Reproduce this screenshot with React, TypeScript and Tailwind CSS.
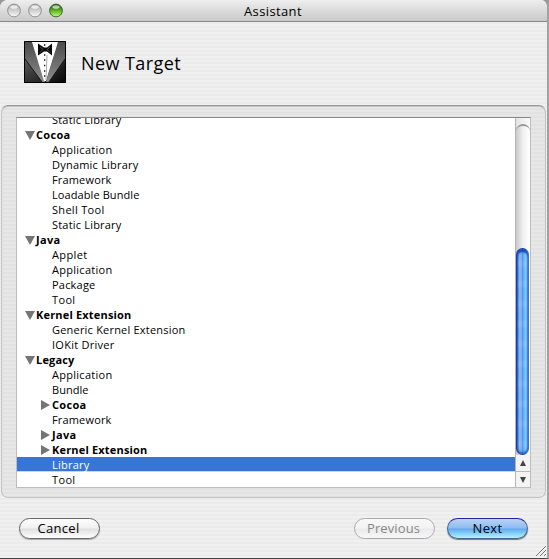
import React from "react";

type Row = { label: string; kind: "leaf" | "open" | "closed"; w: number; selected?: boolean };

const rows: Row[] = [
  { label: "Static Library", kind: "leaf", w: 69.5 },
  { label: "Cocoa", kind: "open", w: 34.5 },
  { label: "Application", kind: "leaf", w: 60.5 },
  { label: "Dynamic Library", kind: "leaf", w: 86.5 },
  { label: "Framework", kind: "leaf", w: 59.5 },
  { label: "Loadable Bundle", kind: "leaf", w: 87.5 },
  { label: "Shell Tool", kind: "leaf", w: 52.5 },
  { label: "Static Library", kind: "leaf", w: 69.5 },
  { label: "Java", kind: "open", w: 24.5 },
  { label: "Applet", kind: "leaf", w: 35.5 },
  { label: "Application", kind: "leaf", w: 60.5 },
  { label: "Package", kind: "leaf", w: 43.5 },
  { label: "Tool", kind: "leaf", w: 23.5 },
  { label: "Kernel Extension", kind: "open", w: 95.5 },
  { label: "Generic Kernel Extension", kind: "leaf", w: 133.5 },
  { label: "IOKit Driver", kind: "leaf", w: 62.5 },
  { label: "Legacy", kind: "open", w: 38.5 },
  { label: "Application", kind: "leaf", w: 60.5 },
  { label: "Bundle", kind: "leaf", w: 36.5 },
  { label: "Cocoa", kind: "closed", w: 34.5 },
  { label: "Framework", kind: "leaf", w: 59.5 },
  { label: "Java", kind: "closed", w: 24.5 },
  { label: "Kernel Extension", kind: "closed", w: 95.5 },
  { label: "Library", kind: "leaf", w: 37.5, selected: true },
  { label: "Tool", kind: "leaf", w: 23.5 },
];

/** Text whose letter spacing is adjusted so that it spans a given width. */
function Fit({ text, w }: { text: string; w: number }) {
  const ref = React.useRef<HTMLSpanElement>(null);
  const [gap, setGap] = React.useState(0);
  React.useLayoutEffect(() => {
    if (ref.current) setGap((w - ref.current.getBoundingClientRect().width) / text.length);
  }, [text, w]);
  return (
    <span ref={ref} className="whitespace-nowrap" style={{ letterSpacing: gap }}>
      {text}
    </span>
  );
}

function TreeRow({ row }: { row: Row }) {
  const bold = row.kind !== "leaf";
  return (
    <div
      className={`flex h-[15px] shrink-0 items-center text-[11px] leading-[15px] ${
        row.selected ? "border-b border-[#c3d5f3] bg-[#3875d7] text-white" : "text-black"
      } ${bold ? "font-bold" : "font-medium"} ${row.kind === "open" ? "pl-2" : row.kind === "closed" ? "pl-6" : "pl-[35px]"}`}
    >
      {row.kind === "open" && (
        <svg className="mr-px shrink-0" width="10" height="10" viewBox="0 0 10 10">
          <path d="M0 1h10L5 10z" fill="#757575" />
        </svg>
      )}
      {row.kind === "closed" && (
        <svg className="mr-[2px] shrink-0" width="9" height="10" viewBox="0 0 9 10">
          <path d="M0 0v10l9-5z" fill="#757575" />
        </svg>
      )}
      <Fit text={row.label} w={row.w} />
    </div>
  );
}

function Light({ green = false }: { green?: boolean }) {
  const id = green ? "light-green" : "light-grey";
  return (
    <svg width="14" height="15" viewBox="0 0 14 15">
      <defs>
        <linearGradient id={id} x2="0" y2="1">
          <stop stopColor={green ? "#1f4a0c" : "#a8a8a8"} />
          <stop offset=".5" stopColor={green ? "#5cb024" : "#cfcfcf"} />
          <stop offset="1" stopColor={green ? "#c4ff78" : "#fafafa"} />
        </linearGradient>
      </defs>
      <circle cx="7" cy="7.5" r="6.4" fill={`url(#${id})`} stroke={green ? "#3d6427" : "#929292"} />
      <ellipse cx="7" cy="4" rx="3.6" ry="1.8" fill="#fff" opacity={green ? 0.65 : 0.7} />
    </svg>
  );
}

function Tuxedo() {
  return (
    <svg width="42" height="42" viewBox="0 0 42 42">
      <defs>
        <linearGradient id="coat" x2="0" y2="1">
          <stop stopColor="#777" />
          <stop offset="1" stopColor="#050505" />
        </linearGradient>
        <linearGradient id="coat-shade" x2="1" y2="0">
          <stop stopColor="#777" stopOpacity=".4" />
          <stop offset="1" stopColor="#000" stopOpacity=".5" />
        </linearGradient>
        <linearGradient id="lapel" x2="0" y2="1">
          <stop stopColor="#4b4b4b" />
          <stop offset="1" stopColor="#8c8c8c" />
        </linearGradient>
      </defs>
      <path d="M0 0h42v42H0z" fill="url(#coat)" />
      <path d="M0 0h42v42H0z" fill="url(#coat-shade)" />
      <path d="M1 1h8l12 40h-3L1 18z" fill="url(#lapel)" />
      <path d="M41 1h-7L22 41h3l16-23z" fill="url(#lapel)" />
      <path d="M1 18l17 23M41 18L25 41" stroke="#151515" strokeWidth="1" />
      <path d="M8 1h26L22 40h-2z" fill="#fff" />
      <path d="M23 14L22 39" stroke="#aaa" />
      <path d="M14 2.500l6 4h3l5-4v12l-5-4h-3l-6 4z" fill="#080808" />
      <path d="M16 6l3 2.500-3 3M26 6l-3 2.500 3 3" stroke="#666" strokeWidth=".7" fill="none" />
      <path d="M20 4h1.300M20 14h1.300M20 19h1.300M20 24.500h1.300M20 30h1.300M20 35h1.300" stroke="#111" strokeWidth="1.300" />
      <path d="M.5.5h41v41H.5z" fill="none" stroke="#000" />
    </svg>
  );
}

export default function App() {
  return (
    <div className="h-[559px] w-[549px] bg-[#999]">
      <div className="flex h-[559px] w-[549px] flex-col overflow-hidden rounded-t-[8px] border-r-2 border-b border-r-[#a2a2a2] border-b-[#444] bg-[repeating-linear-gradient(#f0f0f0_0_2px,#ebebeb_2px_4px)] font-['Open_Sans','Noto_Sans',sans-serif] font-medium text-black">
        <header className="flex h-[22px] shrink-0 items-center border-b border-[#888] bg-linear-to-b from-[#eeeeee] to-[#c9c9c9] pl-[7px]">
          <div className="flex w-[56px] gap-[7px]">
            <Light />
            <Light />
            <Light green />
          </div>
          <div className="ml-[181px] pt-[2px] text-[13px]">
            <Fit text="Assistant" w={58} />
          </div>
        </header>
        <section className="flex h-[83px] shrink-0 items-start pt-[19px] pl-6">
          <Tuxedo />
          <h1 className="mt-[9px] ml-[15px] text-[18px] leading-[27px]">
            <Fit text="New Target" w={100} />
          </h1>
        </section>
        <main className="mr-px ml-px h-[393px] shrink-0 rounded-[7px] border border-[#c2c2c2] border-t-[#989898] bg-[repeating-linear-gradient(#e7e7e7_0_2px,#e2e2e2_2px_4px)] pt-[11px] pl-[14px] shadow-[inset_0_1px_0_#c4c4c4]">
          <div className="flex h-[371px] w-[515px] border border-[#bdbdbd] border-t-[#888] bg-white">
            <div className="h-full flex-1 overflow-hidden">
              <div className="-mt-[6px] flex flex-col">
                {rows.map((row, i) => (
                  <TreeRow key={i} row={row} />
                ))}
              </div>
            </div>
            <div className="flex w-[15px] flex-col border-l border-[#b5b5b5] bg-linear-to-r from-[#c9c9c9] via-[#f0f0f0] to-white">
              <div className="-mb-[3px] h-[9px] bg-linear-to-r from-[#e4e4e4] to-[#fafafa]" />
              <div className="h-[124px] rounded-t-full border-t-2 border-[#999] bg-linear-to-r from-[#c9c9c9] via-[#f0f0f0] to-white" />
              <div className="mr-px h-[207px] rounded-full border border-[#173da8] border-r-[#3976bd] bg-[repeating-linear-gradient(#ffffff00_0_10px,#ffffff14_13px_16px,#ffffff00_20px),linear-gradient(90deg,#2a62d0,#8bb6ef_22%,#7aaeee_42%,#4f9bee_50%,#86cdff_80%,#58a4e6)] shadow-[inset_0_3px_2px_#1647b8,inset_0_-2px_2px_#2a67bd]" />
              <div className="flex h-4 items-center justify-center bg-[#f4f4f4]">
                <svg width="6" height="6">
                  <path d="M3 0l3 6H0z" fill="#444" />
                </svg>
              </div>
              <div className="flex flex-1 items-center justify-center border-t border-[#bbb] bg-[#f4f4f4]">
                <svg width="6" height="6">
                  <path d="M0 0h6L3 6z" fill="#444" />
                </svg>
              </div>
            </div>
          </div>
        </main>
        <footer className="flex flex-1 items-start pt-[20px] pl-[19px] text-[13px]">
          <button className="flex h-[21px] w-[81px] items-center justify-center rounded-full border border-[#666] bg-[linear-gradient(#fdfdfd,#f0f0f0_48%,#e0e0e0_52%,#ffffff)] pr-[2px] shadow-[0_1px_1px_#aaa]">
            <Fit text="Cancel" w={42} />
          </button>
          <button className="ml-[254px] flex h-[21px] w-[81px] items-center justify-center rounded-full border border-[#aaa] bg-[linear-gradient(#f8f8f8,#f3f3f3_48%,#eaeaea_52%,#f8f8f8)] pr-[2px] text-[#888]">
            <Fit text="Previous" w={53} />
          </button>
          <button className="ml-[12px] flex h-[21px] w-[81px] items-center justify-center rounded-full border border-[#4b6390] border-t-[#2a2498] bg-[linear-gradient(#b9d3f4,#8dbcf2_48%,#62a8ef_52%,#aef5ff)] shadow-[0_1px_1px_#777]">
            <Fit text="Next" w={30} />
          </button>
          <svg className="mt-[27px] ml-[7px] shrink-0" width="12" height="12">
            <path d="M1 11L11 1M5 11l6-6M9 11l2-2" stroke="#777" />
          </svg>
        </footer>
      </div>
    </div>
  );
}
